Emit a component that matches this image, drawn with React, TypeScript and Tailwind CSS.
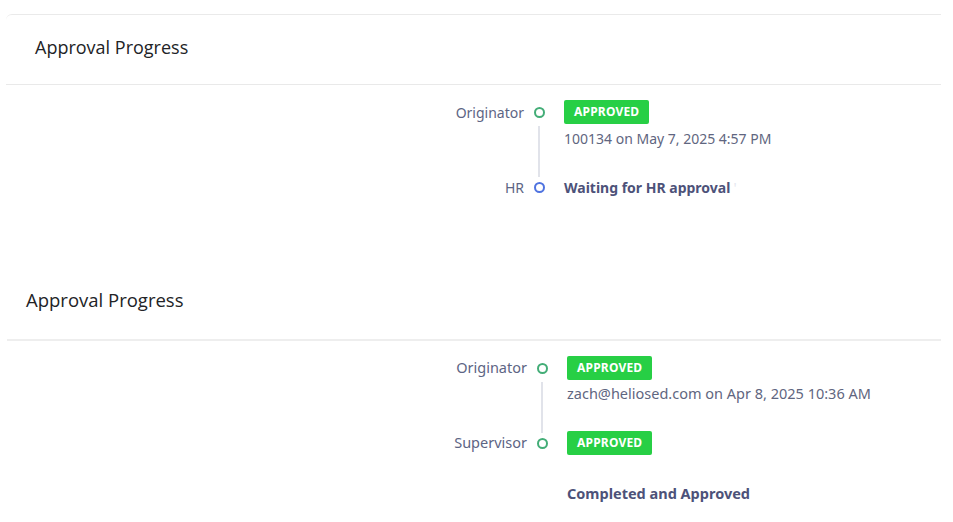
type Step = {
  role: string
  dot: 'green' | 'blue'
  badge?: boolean
  note?: string
  waiting?: string
}

const firstSteps: Step[] = [
  { role: 'Originator', dot: 'green', badge: true, note: '100134 on May 7, 2025 4:57 PM' },
  { role: 'HR', dot: 'blue', waiting: 'Waiting for HR approval' },
]

const secondSteps: Step[] = [
  { role: 'Originator', dot: 'green', badge: true, note: 'zach@heliosed.com on Apr 8, 2025 10:36 AM' },
  { role: 'Supervisor', dot: 'green', badge: true },
]

function Badge() {
  return (
    <span className="inline-flex h-[24px] items-center self-start rounded-[2px] bg-[#27cf45] px-[10px] text-[12px] font-bold tracking-[0.2px] text-white">
      APPROVED
    </span>
  )
}

function Timeline({ steps, labelWidth, textSize, noteGap }: { steps: Step[]; labelWidth: string; textSize: string; noteGap: string }) {
  return (
    <div className={`flex flex-col font-['Noto_Sans',sans-serif] ${textSize}`}>
      {steps.map((s, i) => {
        const last = i === steps.length - 1
        return (
          <div key={s.role} className="flex">
            <div className={`${labelWidth} flex h-[24px] items-center justify-end text-[#5d6584]`}>
              {s.role}
            </div>
            <div className="flex w-[30px] flex-col items-center">
              <div className="flex h-[24px] items-center">
                <span
                  className={`block h-[11px] w-[11px] rounded-full border-2 ${
                    s.dot === 'green' ? 'border-[#43ad77]' : 'border-[#4f73e0]'
                  }`}
                />
              </div>
              {!last && <div className="mb-[-2px] mt-[2px] w-[2px] flex-1 bg-[#e1e3ea]" />}
            </div>
            <div className={`ml-[10px] flex flex-col ${last ? '' : 'min-h-[75px]'}`}>
              {s.badge && <Badge />}
              {s.note && <div className={`${noteGap} leading-[22px] text-[#5f6680]`}>{s.note}</div>}
              {s.waiting && (
                <div className="flex h-[24px] items-center font-bold text-[#4d5279]">
                  {s.waiting}
                  <span className="ml-[3px] font-normal text-[#e4e6ee]">'</span>
                </div>
              )}
            </div>
          </div>
        )
      })}
    </div>
  )
}

export default function App() {
  return (
    <div className="min-h-screen bg-white pt-[14px]">
      {/* first card */}
      <section className="ml-[6px] mr-[12px] rounded-tl-[6px] border-t border-[#eaeaea]">
        <div className="flex h-[70px] items-center border-b border-[#e9e9e9] pl-[29px] pb-[4px] font-['Open_Sans',sans-serif] text-[18px] text-[#222326]">
          Approval Progress
        </div>
        <div className="h-[178px] pt-[15px]">
          <Timeline steps={firstSteps} labelWidth="w-[518px]" textSize="text-[14px]" noteGap="mt-[4px]" />
        </div>
      </section>

      {/* second card */}
      <section className="ml-[7px] mr-[12px]">
        <div className="flex h-[78px] items-center border-b-2 border-[#eeeeee] pl-[19px] pb-[2px] font-['Open_Sans',sans-serif] text-[18.5px] text-[#222326]">
          Approval Progress
        </div>
        <div className="pt-[15px]">
          <Timeline steps={secondSteps} labelWidth="w-[520px]" textSize="text-[14.5px]" noteGap="mt-[2px]" />
          <div className="ml-[560px] mt-[28px] font-['Noto_Sans',sans-serif] text-[14.5px] font-bold text-[#4d5279]">
            Completed and Approved
          </div>
        </div>
      </section>
    </div>
  )
}
